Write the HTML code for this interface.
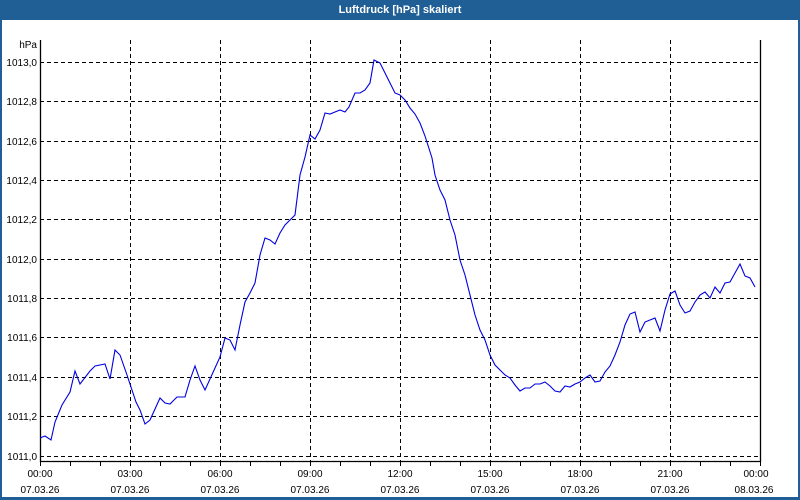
<!DOCTYPE html>
<html><head><meta charset="utf-8"><style>
html,body{margin:0;padding:0;width:800px;height:500px;overflow:hidden;background:#fff;font-family:"Liberation Sans","DejaVu Sans",sans-serif}
</style></head><body>
<svg width="800" height="500" xmlns="http://www.w3.org/2000/svg" font-family="Liberation Sans, DejaVu Sans, sans-serif">
<rect x="0" y="0" width="800" height="500" fill="#1f5f96"/>
<rect x="2" y="20" width="796" height="477" fill="#fff"/>
<text x="400" y="13" fill="#fff" font-size="11" font-weight="bold" text-anchor="middle">Luftdruck [hPa] skaliert</text>
<g stroke="#000" stroke-width="1" stroke-dasharray="4,3" fill="none">
<path d="M40 62.5H760M40 101.5H760M40 141.5H760M40 180.5H760M40 219.5H760M40 259.5H760M40 298.5H760M40 337.5H760M40 377.5H760M40 416.5H760M40 456.5H760"/>
<path d="M130.5 40V461M220.5 40V461M310.5 40V461M400.5 40V461M490.5 40V461M580.5 40V461M670.5 40V461"/>
</g>
<path d="M40.5 40V461.5H760.5V40" stroke="#000" stroke-width="1.3" fill="none"/>
<g stroke="#000" stroke-width="1">
<path d="M40.5 461V466M70.5 461V466M100.5 461V466M130.5 461V466M160.5 461V466M190.5 461V466M220.5 461V466M250.5 461V466M280.5 461V466M310.5 461V466M340.5 461V466M370.5 461V466M400.5 461V466M430.5 461V466M460.5 461V466M490.5 461V466M520.5 461V466M550.5 461V466M580.5 461V466M610.5 461V466M640.5 461V466M670.5 461V466M700.5 461V466M730.5 461V466M760.5 461V466"/>
</g>
<g font-size="10" fill="#000" text-anchor="end">
<text x="37" y="48">hPa</text>
<text x="37" y="66">1013,0</text><text x="37" y="105">1012,8</text><text x="37" y="145">1012,6</text>
<text x="37" y="184">1012,4</text><text x="37" y="223">1012,2</text><text x="37" y="263">1012,0</text>
<text x="37" y="302">1011,8</text><text x="37" y="341">1011,6</text><text x="37" y="381">1011,4</text>
<text x="37" y="420">1011,2</text><text x="37" y="460">1011,0</text>
</g>
<g font-size="10" fill="#000" text-anchor="middle">
<text x="40" y="477">00:00</text><text x="130" y="477">03:00</text><text x="220" y="477">06:00</text><text x="310" y="477">09:00</text><text x="400" y="477">12:00</text><text x="490" y="477">15:00</text><text x="580" y="477">18:00</text><text x="670" y="477">21:00</text><text x="756" y="477">00:00</text>
<text x="40" y="493">07.03.26</text><text x="130" y="493">07.03.26</text><text x="220" y="493">07.03.26</text><text x="310" y="493">07.03.26</text><text x="400" y="493">07.03.26</text><text x="490" y="493">07.03.26</text><text x="580" y="493">07.03.26</text><text x="670" y="493">07.03.26</text><text x="754" y="493">08.03.26</text>
</g>
<polyline fill="none" stroke="#0000e0" stroke-width="1.1" points="40,438 45,436 51,440 55,422 62,405 70,392 75,371 80,384 90,371 95,366 105,364 110,379 115,350 120,355 127,375 130,384 136,402 140,410 145,424 150,420 160,398 165,403 170,404 177,397 185,397 190,380 195,366 200,380 205,390 215,368 220,357 225,338 230,340 235,350 240,325 245,302 250,293 255,283 260,255 265,238 270,240 275,244 280,233 285,225 290,220 295,215 300,175 305,157 310,135 315,139 320,130 325,113 330,114 335,112 340,110 345,112 349,107 355,93 360,93 365,90 370,83 374,60 378,62 380,63 385,73 390,83 395,93 400,95 405,100 410,108 415,114 420,123 425,136 432,158 435,175 440,190 445,200 450,220 455,235 460,260 465,275 470,295 475,315 480,330 485,340 490,355 495,365 500,370 505,375 510,378 515,385 520,391 525,388 530,388 535,384 540,384 545,382 550,386 555,391 560,392 565,386 570,387 575,384 580,382 585,378 590,375 595,382 600,381 605,372 610,366 615,355 620,342 625,325 630,314 635,312 640,332 645,322 650,320 655,318 660,331 665,310 670,294 675,291 680,305 685,313 690,311 695,302 700,295 705,292 710,298 715,287 720,293 725,283 730,282 735,273 740,264 745,276 750,278 755,287"/>
</svg>
</body></html>
